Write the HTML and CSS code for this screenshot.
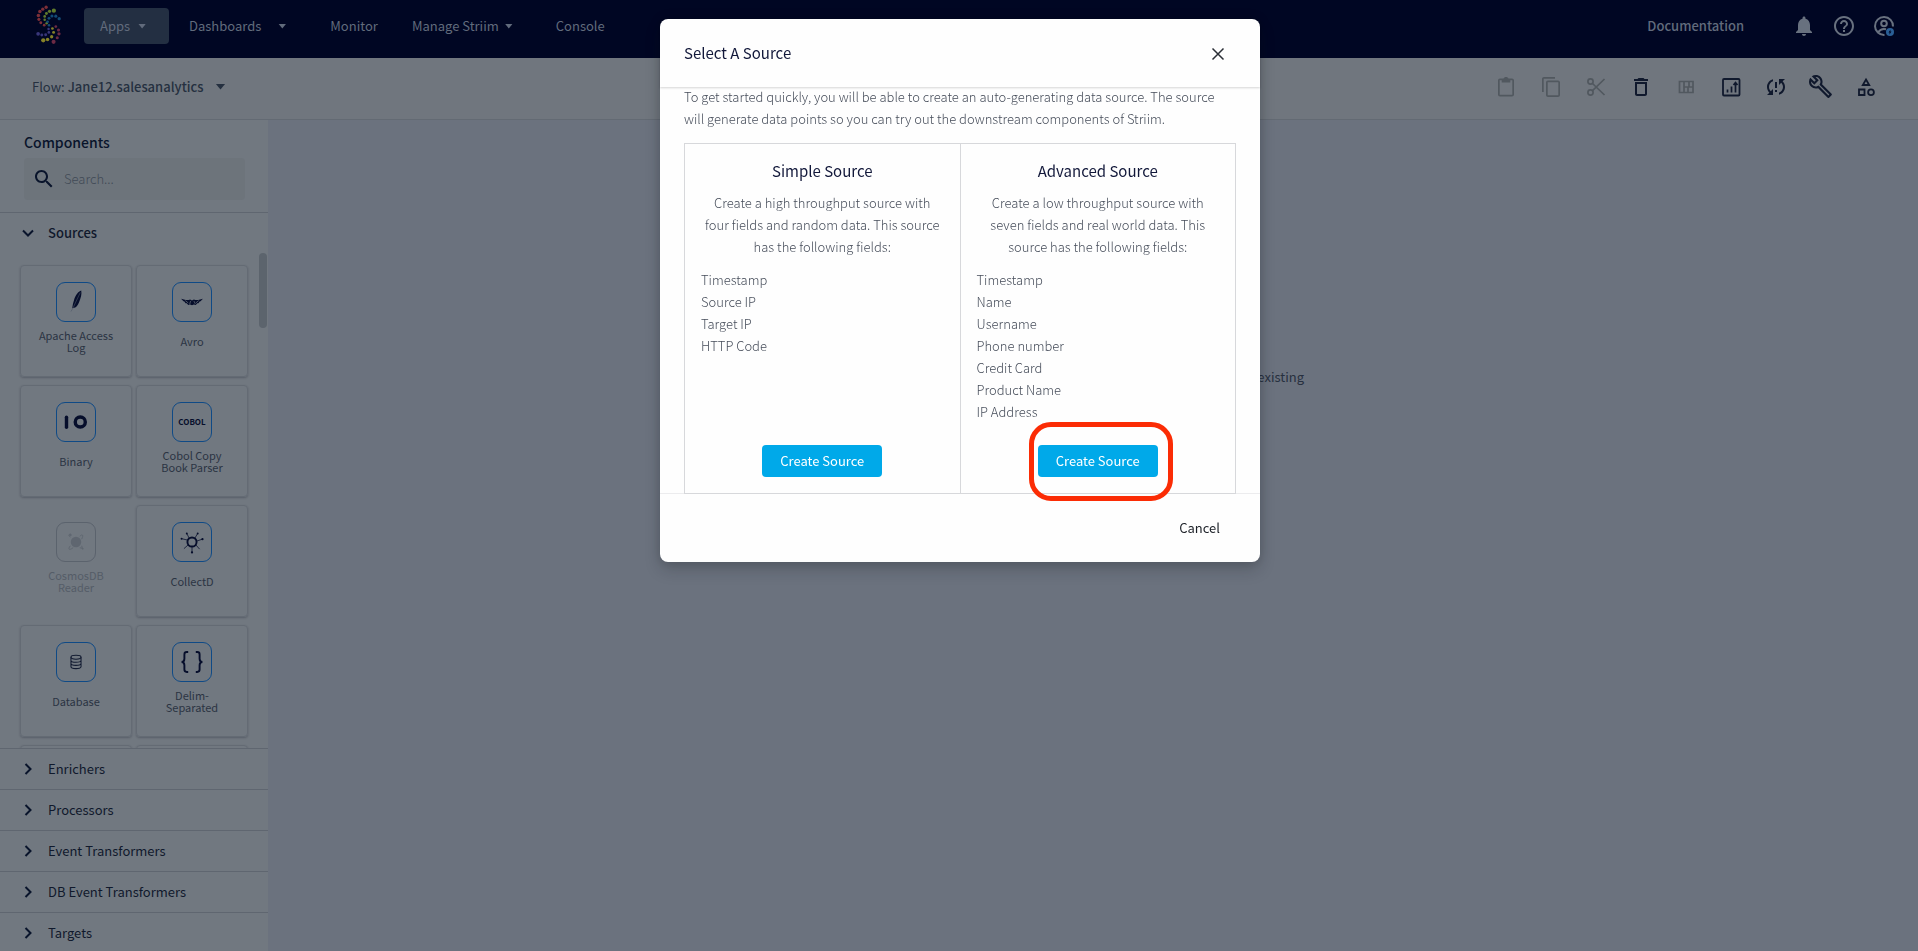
FILE: index.html
```html
<!DOCTYPE html>
<html lang="en">
<head>
<meta charset="utf-8">
<title>Flow Designer</title>
<link rel="stylesheet" href="styles.css">
</head>
<body>
<div class="app">
  <header class="topbar">
    <svg class="logo" viewBox="0 0 60 60" width="60" height="58" aria-hidden="true">
      <g fill="#7c2f38"><circle cx="26" cy="7.500" r="1.700"/><circle cx="22.500" cy="9.500" r="1.700"/><circle cx="19.500" cy="12" r="1.800"/><circle cx="18" cy="16" r="1.800"/><circle cx="18.500" cy="20" r="1.600"/><circle cx="20.500" cy="23.500" r="1.500"/><circle cx="24" cy="26" r="1.400"/></g>
      <g fill="#5f7a2c"><circle cx="34" cy="11" r="2.200"/><circle cx="29.500" cy="11.700" r="1.700"/><circle cx="26.300" cy="14" r="1.500"/><circle cx="24.500" cy="17" r="1.400"/><circle cx="24.500" cy="20.500" r="1.300"/><circle cx="26.500" cy="24" r="1.300"/></g>
      <g fill="#124c76"><circle cx="39.500" cy="19.300" r="1.700"/><circle cx="36" cy="16.700" r="1.600"/><circle cx="32" cy="16.500" r="1.600"/><circle cx="29" cy="19" r="1.500"/><circle cx="27.500" cy="22.500" r="1.400"/><circle cx="29" cy="26" r="1.300"/></g>
      <g fill="#38367a"><circle cx="17.700" cy="35" r="1.900"/><circle cx="21.500" cy="36.200" r="1.500"/><circle cx="25.500" cy="36" r="1.500"/><circle cx="28.800" cy="33.500" r="1.400"/><circle cx="28.500" cy="30" r="1.300"/></g>
      <g fill="#858128"><circle cx="32.500" cy="29.500" r="1.400"/><circle cx="33.700" cy="33.500" r="1.500"/><circle cx="31.700" cy="38" r="1.700"/><circle cx="27.500" cy="40.800" r="1.800"/><circle cx="23" cy="41.700" r="2.200"/></g>
      <g fill="#6c2a44"><circle cx="36" cy="27.500" r="1.400"/><circle cx="38.800" cy="31" r="1.600"/><circle cx="39.300" cy="35" r="1.700"/><circle cx="37.500" cy="39" r="1.600"/><circle cx="33.700" cy="43.300" r="2.100"/></g>
    </svg>
    <nav class="nav">
      <button class="nav-item nav-active" type="button">Apps <i class="caret"></i></button>
      <button class="nav-item nav-dash" type="button">Dashboards <i class="caret"></i></button>
      <a class="nav-item nav-monitor" href="#">Monitor</a>
      <button class="nav-item nav-manage" type="button">Manage Striim <i class="caret"></i></button>
      <a class="nav-item" href="#">Console</a>
    </nav>
    <div class="top-actions">
      <a class="docs" href="#">Documentation</a>
      <button class="icon-btn" type="button" aria-label="Notifications"><svg viewBox="0 0 24 24"><path d="M12 22c1.100 0 2-.9 2-2h-4c0 1.100.9 2 2 2zm6-6v-5c0-3.070-1.630-5.640-4.500-6.320V4c0-.83-.67-1.500-1.500-1.500s-1.500.67-1.500 1.500v.68C7.640 5.360 6 7.920 6 11v5l-2 2v1h16v-1l-2-2z"/></svg></button>
      <button class="icon-btn" type="button" aria-label="Help"><svg viewBox="0 0 24 24"><path d="M11 18h2v-2h-2v2zm1-16C6.480 2 2 6.480 2 12s4.480 10 10 10 10-4.480 10-10S17.520 2 12 2zm0 18c-4.410 0-8-3.590-8-8s3.590-8 8-8 8 3.590 8 8-3.590 8-8 8zm0-14c-2.210 0-4 1.790-4 4h2c0-1.100.9-2 2-2s2 .9 2 2c0 2-3 1.750-3 5h2c0-2.250 3-2.500 3-5 0-2.210-1.790-4-4-4z"/></svg></button>
      <button class="icon-btn" type="button" aria-label="Account"><svg viewBox="0 0 24 24"><g fill="none" stroke="currentColor" stroke-width="2"><path d="M12.500 21A9 9 0 1 1 21 12.500M6 18.500c2-3 5-4 8-3.200"/><circle cx="12" cy="9.500" r="2.800"/></g><circle cx="18" cy="18" r="4" fill="#2a5f96"/><path d="M18.500 15.500l-2 3h1.200l-.4 2.200 2.200-3.200h-1.200z" fill="#000623"/></svg></button>
    </div>
  </header>

  <div class="flowbar">
    <button class="flow-name" type="button"><span>Flow: <strong>Jane12.salesanalytics</strong></span><i class="caret caret-lg"></i></button>
    <div class="tools">
      <button class="tool off" type="button" aria-label="Paste" disabled><svg viewBox="0 0 24 24"><path d="M18 3.500h-3.500C14.200 2.600 13.200 2 12 2s-2.200.6-2.500 1.500H6c-1.100 0-2 .9-2 2v14c0 1.100.9 2 2 2h12c1.100 0 2-.9 2-2v-14c0-1.100-.9-2-2-2zm.3 16.300H5.700V5.200h2V7.500h8.600V5.200h2z"/></svg></button>
      <button class="tool off" type="button" aria-label="Copy" disabled><svg viewBox="0 0 24 24"><path d="M16 2H5c-1.100 0-2 .9-2 2v13h1.700V3.700H16V2zm3 3.500H9c-1.100 0-2 .9-2 2V20c0 1.100.9 2 2 2h10c1.100 0 2-.9 2-2V7.500c0-1.100-.9-2-2-2zm.3 14.800H8.700V7.200h10.600v13.100z"/></svg></button>
      <button class="tool off" type="button" aria-label="Cut" disabled><svg viewBox="0 0 24 24" fill="none" stroke="currentColor" stroke-width="1.700"><circle cx="6.500" cy="6.500" r="2.600"/><circle cx="6.500" cy="17.500" r="2.600"/><path d="M8.500 8.500L20.500 20M8.500 15.700L20.500 4"/></svg></button>
      <button class="tool" type="button" aria-label="Delete"><svg viewBox="0 0 24 24"><path d="M6 19c0 1.100.9 2 2 2h8c1.100 0 2-.9 2-2V7H6v12zM8 9h8v10H8V9zm7.500-5l-1-1h-5l-1 1H5v2h14V4z"/></svg></button>
      <button class="tool off" type="button" aria-label="Layout" disabled><svg viewBox="0 0 24 24" fill="none" stroke="currentColor" stroke-width="1.700"><path d="M5.500 6.500h13.500v11H5.500zM10 6.500v11M10 12h9M15 6.500v5.500M14 12v5.500"/></svg></button>
      <button class="tool" type="button" aria-label="Metrics"><svg viewBox="0 0 24 24" fill="none" stroke="currentColor" stroke-width="1.800"><rect x="4" y="4" width="16.500" height="16.500" rx="1"/><path d="M8.500 17.500v-3M12.500 17.500v-6M16.500 17.500V8M14.500 10l2-2.500 2 2.500" stroke-width="1.700"/></svg></button>
      <button class="tool" type="button" aria-label="Sync problem"><svg viewBox="0 0 24 24"><path d="M3 12c0 2.210.91 4.200 2.360 5.640L3 20h6v-6l-2.240 2.240C5.680 15.150 5 13.660 5 12c0-2.610 1.670-4.830 4-5.650V4.260C5.550 5.150 3 8.270 3 12zm8 5h2v-2h-2v2zM21 4h-6v6l2.240-2.240C18.320 8.850 19 10.340 19 12c0 2.610-1.670 4.830-4 5.650v2.090c3.450-.89 6-4.010 6-7.740 0-2.210-.91-4.200-2.360-5.640L21 4zm-10 9h2V7h-2v6z"/></svg></button>
      <button class="tool" type="button" aria-label="Settings"><svg viewBox="1 1 23 23"><path d="M22.610 18.990l-9.080-9.080c.93-2.340.45-5.100-1.440-7C9.790.61 6.210.4 3.660 2.260L7.500 6.110 6.080 7.520 2.250 3.690C.39 6.230.6 9.820 2.900 12.110c1.860 1.860 4.570 2.350 6.890 1.480l9.110 9.110c.39.39 1.020.39 1.410 0l2.300-2.300c.4-.38.4-1.010 0-1.410zm-3 1.600l-9.460-9.460c-.61.450-1.290.72-2 .82-1.360.2-2.790-.21-3.830-1.250C3.370 9.760 2.930 8.500 3 7.260l3.090 3.090 4.240-4.240-3.090-3.090c1.240-.07 2.490.37 3.440 1.310 1.080 1.080 1.490 2.570 1.240 3.960-.12.710-.42 1.370-.88 1.960l9.450 9.450-.88.890z"/></svg></button>
      <button class="tool" type="button" aria-label="Components"><svg viewBox="0 0 24 24" fill="none" stroke="currentColor" stroke-width="1.800"><path d="M12 4.500L15.200 10H8.800zM5 14.500h5.500V20H5z"/><circle cx="17" cy="17.200" r="2.900"/></svg></button>
    </div>
  </div>

  <div class="workspace">
    <aside class="sidebar">
      <div class="side-head">
        <h2>Components</h2>
        <label class="search">
          <svg viewBox="0 0 24 24"><path d="M15.500 14h-.79l-.28-.27C15.410 12.590 16 11.110 16 9.500 16 5.910 13.090 3 9.500 3S3 5.910 3 9.500 5.910 16 9.500 16c1.610 0 3.090-.59 4.230-1.570l.27.28v.79l5 4.990L20.490 19l-4.990-5zm-6 0C7.010 14 5 11.990 5 9.500S7.010 5 9.500 5 14 7.010 14 9.500 11.990 14 9.500 14z"/></svg>
          <input type="text" placeholder="Search..." aria-label="Search components">
        </label>
      </div>
      <button class="group open" type="button"><svg viewBox="0 0 14 14"><path d="M2 4.500l5 5 5-5"/></svg>Sources</button>
      <div class="cards-wrap">
        <div class="cards">
          <div class="card"><span class="tile"><svg viewBox="0 0 40 40"><path d="M25.500 8c-3 .8-6 5-7.500 9.500-1 3-1.600 6-2 9l2-.5c2 .3 4-2.500 5.300-6C25 16 26.300 12 25.500 8z" fill="#060e2b"/><path d="M24.500 10L16.500 27l-1.800 3" fill="none" stroke="#4e5668" stroke-width=".6"/></svg></span><span class="label">Apache Access Log</span></div>
          <div class="card"><span class="tile"><svg viewBox="0 0 40 40"><path d="M8.500 16.500l5 1.300 3 .2 1.500-.6 2 .9 2-.9 1.500.6 3-.2 5-1.300-2.500 2.700-1 .2-1.200 1.800-1.300.2-1.500 1.800-2-.7-2 .9-2-.9-2 .7-1.500-1.800-1.300-.2-1.200-1.800-1-.2z" fill="#060e2b"/><path d="M13 18.500l3 2.500M18.500 19l-1 3.500M22 19l1.500 3M27 18.500l-3 2.500" stroke="#717880" stroke-width=".7"/></svg></span><span class="label">Avro</span></div>
          <div class="card"><span class="tile"><svg viewBox="0 0 40 40" fill="none" stroke="#060e2b" stroke-width="3.600"><path d="M10 15v10.500" stroke-linecap="round"/><circle cx="24.500" cy="20" r="5.300"/></svg></span><span class="label">Binary</span></div>
          <div class="card"><span class="tile cobol">COBOL</span><span class="label">Cobol Copy Book Parser</span></div>
          <div class="card disabled"><span class="tile"><svg viewBox="0 0 40 40"><circle cx="20" cy="20" r="5.500" fill="#454d5a"/><path d="M14 15c-3-3-1-3 1-2M24 14c3-3 4-1 2 3M14 24c-3 4-1 5 3 2M26 24l1 4M24 26l4 1M14 11v3M12.500 12.500h3" fill="none" stroke="#454d5a"/></svg></span><span class="label">CosmosDB Reader</span></div>
          <div class="card"><span class="tile"><svg viewBox="0 0 40 40" fill="none" stroke="#060e2b"><circle cx="20" cy="20" r="4.800" stroke-width="2"/><path d="M20 25v6M25 19l6-2M15.500 18L9 16.500M17 16l-2.500-5M23 16l3-5M16 23l-4.500 4M24 23l4 4.500" stroke-width=".8"/><g fill="#060e2b" stroke="none"><circle cx="20" cy="31" r="1.200"/><circle cx="31" cy="17" r="1.200"/><circle cx="9" cy="16.500" r="1"/><circle cx="14.500" cy="11" r="1"/><circle cx="26" cy="11" r="1"/></g></svg></span><span class="label">CollectD</span></div>
          <div class="card"><span class="tile"><svg viewBox="0 0 40 40" fill="none" stroke="#111a30" stroke-width="1.100"><ellipse cx="20" cy="15" rx="5.300" ry="2"/><path d="M14.700 15v10c0 2.600 10.600 2.600 10.600 0V15M14.700 18.300c0 2.600 10.600 2.600 10.600 0M14.700 21.600c0 2.600 10.600 2.600 10.600 0"/></svg></span><span class="label">Database</span></div>
          <div class="card"><span class="tile"><svg viewBox="0 0 40 40" fill="none" stroke="#060e2b" stroke-width="2"><path d="M16 9.500h-1.500c-2 0-2.500 1-2.500 2.500v4.500c0 2-1 3.500-3 3.500 2 0 3 1.500 3 3.500V28c0 1.500.5 2.500 2.500 2.500H16M24 9.500h1.500c2 0 2.500 1 2.500 2.500v4.500c0 2 1 3.500 3 3.500-2 0-3 1.500-3 3.500V28c0 1.500-.5 2.500-2.500 2.500H24"/></svg></span><span class="label">Delim-Separated</span></div>
          <div class="card"></div>
          <div class="card"></div>
        </div>
        <span class="thumb"></span>
      </div>
      <button class="group" type="button"><svg viewBox="0 0 14 14"><path d="M4.500 2l5 5-5 5"/></svg>Enrichers</button>
      <button class="group" type="button"><svg viewBox="0 0 14 14"><path d="M4.500 2l5 5-5 5"/></svg>Processors</button>
      <button class="group" type="button"><svg viewBox="0 0 14 14"><path d="M4.500 2l5 5-5 5"/></svg>Event Transformers</button>
      <button class="group" type="button"><svg viewBox="0 0 14 14"><path d="M4.500 2l5 5-5 5"/></svg>DB Event Transformers</button>
      <button class="group" type="button"><svg viewBox="0 0 14 14"><path d="M4.500 2l5 5-5 5"/></svg>Targets</button>
    </aside>
    <main class="canvas"><p class="hint">existing</p></main>
  </div>
</div>

<div class="overlay">
  <section class="modal" role="dialog" aria-labelledby="dlg-title">
    <div class="modal-head">
      <h1 id="dlg-title">Select A Source</h1>
      <button class="close" type="button" aria-label="Close"><svg viewBox="0 0 14 14"><path d="M1.500 1.500l11 11M12.500 1.500l-11 11"/></svg></button>
    </div>
    <div class="modal-body">
      <p class="intro">To get started quickly, you will be able to create an auto-generating data source. The source will generate data points so you can try out the downstream components of Striim.</p>
      <div class="options">
        <article class="option">
          <h3>Simple Source</h3>
          <p>Create a high throughput source with four fields and random data. This source has the following fields:</p>
          <ul><li>Timestamp</li><li>Source IP</li><li>Target IP</li><li>HTTP Code</li></ul>
          <div class="action"><button class="create" type="button">Create Source</button></div>
        </article>
        <article class="option">
          <h3>Advanced Source</h3>
          <p>Create a low throughput source with seven fields and real world data. This source has the following fields:</p>
          <ul><li>Timestamp</li><li>Name</li><li>Username</li><li>Phone number</li><li>Credit Card</li><li>Product Name</li><li>IP Address</li></ul>
          <div class="action"><button class="create" type="button">Create Source</button><span class="ring"></span></div>
        </article>
      </div>
    </div>
    <div class="modal-foot"><button class="cancel" type="button">Cancel</button></div>
  </section>
</div>
</body>
</html>
```
FILE: styles.css
```css
* { box-sizing: border-box; }
html, body { height: 100%; }
body, h1, h2, h3, p, ul { margin: 0; padding: 0; }
body {
  font-family: "Noto Sans CJK SC", "Open Sans", sans-serif;
  font-size: 13px;
  line-height: 20px;
  color: #151f33;
  background: #6b727e;
  overflow: hidden;
}
button, input {
  font: inherit;
  color: inherit;
  background: none;
  border: 0;
  padding: 0;
}
a { color: inherit; text-decoration: none; }
ul { list-style: none; }
svg { display: block; }

.app { height: 100%; display: flex; flex-direction: column; }

.topbar {
  height: 58px;
  flex: none;
  display: flex;
  align-items: center;
  padding: 0 22px 6px 20px;
  background: #000623;
  color: #616b7c;
}
.logo { flex: none; margin: 6px 4px 0 0; }
.nav { display: flex; align-items: center; }
.nav-item { display: flex; align-items: center; white-space: nowrap; }
.nav-active {
  height: 36px;
  width: 85px;
  padding: 0 16px;
  gap: 8px;
  margin-right: 20px;
  background: #232f42;
  border-radius: 4px;
}
.nav-dash { gap: 17px; margin-right: 44px; }
.nav-monitor { margin-right: 34px; }
.nav-manage { gap: 6px; margin-right: 43px; }
.caret {
  width: 8px;
  height: 5px;
  background: currentColor;
  clip-path: polygon(0 0, 100% 0, 50% 100%);
}
.caret-lg { width: 10px; height: 6px; }
.top-actions { margin-left: auto; display: flex; align-items: center; gap: 16px; }
.docs { font-weight: 500; margin-right: 32px; }
.icon-btn, .tool { width: 24px; height: 24px; flex: none; fill: currentColor; }
.icon-btn { color: #68717f; }

.flowbar {
  height: 62px;
  flex: none;
  display: flex;
  align-items: center;
  justify-content: space-between;
  padding: 0 40px 4px 32px;
  background: #70767e;
  border-bottom: 1px solid #636a73;
}
.flow-name { display: flex; align-items: center; gap: 12px; color: #253040; }
.flow-name strong { font-weight: 500; }
.tools { display: flex; gap: 21px; }
.tool { color: #10192d; }
.off { color: #51585f; }
.flowbar svg[fill="none"] { fill: none; }

.workspace { flex: 1; min-height: 0; display: flex; }
.sidebar {
  width: 268px;
  flex: none;
  display: flex;
  flex-direction: column;
  margin-bottom: -2px;
  background: #717880;
}
.side-head { padding: 12px 23px 12px 24px; }
.side-head h2 { font-size: 14px; font-weight: 500; line-height: 20px; color: #09142b; }
.search {
  display: flex;
  align-items: center;
  gap: 8px;
  height: 42px;
  margin-top: 6px;
  padding: 0 8px;
  background: #6d747b;
  border-radius: 4px;
}
.search svg { width: 24px; height: 24px; flex: none; fill: #09142b; }
.search input { flex: 1; min-width: 0; outline: 0; }
.search input::placeholder { color: #414a56; opacity: 1; font-weight: 300; }
.group {
  height: 41px;
  flex: none;
  display: flex;
  align-items: center;
  gap: 13px;
  padding-left: 21px;
  text-align: left;
  border-top: 1px solid #5f6670;
  color: #10192c;
}
.group svg { width: 14px; height: 14px; fill: none; stroke: #09142b; stroke-width: 2; }
.open { font-weight: 500; }
.cards-wrap { flex: 1; min-height: 0; position: relative; overflow: hidden; }
.cards {
  display: grid;
  grid-template-columns: 1fr 1fr;
  grid-auto-rows: 112px;
  gap: 8px 4px;
  padding: 12px 20px 0;
}
.card {
  display: flex;
  flex-direction: column;
  align-items: center;
  padding-top: 16px;
  border: 1px solid #646b74;
  border-radius: 4px;
  box-shadow: 0 1px 2px rgba(30, 38, 50, 0.3);
  color: #2b3443;
}
.tile {
  width: 40px;
  height: 40px;
  flex: none;
  display: grid;
  place-items: center;
  border: 1px solid #0f4a86;
  border-radius: 9px;
}
.tile svg { width: 38px; height: 38px; }
.cobol { font-size: 8px; font-weight: 700; color: #060e2b; }
.label {
  width: 76px;
  height: 38px;
  display: grid;
  place-items: center;
  font-size: 11px;
  line-height: 12px;
  text-align: center;
}
.disabled { opacity: 0.4; border-color: transparent; box-shadow: none; }
.disabled .tile { border-color: #3b4452; }
.thumb {
  position: absolute;
  top: 0;
  right: 1px;
  width: 8px;
  height: 75px;
  border-radius: 4px;
  background: #5c646d;
}
.canvas { flex: 1; min-width: 0; padding-top: 247px; }
.hint { max-width: 422px; margin: 0 auto; text-align: right; color: #27303f; }

.overlay {
  position: fixed;
  inset: 0;
  display: flex;
  justify-content: center;
  align-items: flex-start;
  padding: 19px 0 0 2px;
}
.modal {
  width: 600px;
  background: #fefefe;
  border-radius: 8px;
  box-shadow: 0 8px 16px rgba(20, 24, 32, 0.2), 0 0 12px rgba(20, 24, 32, 0.15);
}
.modal-head {
  height: 68px;
  display: flex;
  align-items: center;
  justify-content: space-between;
  padding: 2px 35px 0 24px;
  box-shadow: 0 1px 2px rgba(0, 0, 0, 0.16);
}
.modal-head h1 { font-size: 15px; font-weight: 400; line-height: 22px; padding-bottom: 2px; color: #12183a; }
.close { width: 14px; height: 14px; }
.close svg { fill: none; stroke: #2b2f36; stroke-width: 1.5; }
.modal-body { margin-top: -1px; padding: 0 24px; color: #464d5a; font-weight: 300; line-height: 22px; }
.options {
  position: relative;
  display: flex;
  margin-top: 13px;
  border: 1px solid #d7d8db;
}
.option { flex: 1; display: flex; flex-direction: column; padding: 15px 16px 16px; }
.option + .option { border-left: 1px solid #d7d8db; }
.option h3 { font-size: 15px; font-weight: 400; line-height: 24px; text-align: center; color: #12183a; }
.option p { margin: 9px 0 11px; text-align: center; }
.option ul { margin-bottom: 22px; }
.action { position: relative; align-self: center; margin-top: auto; }
.create {
  display: block;
  height: 32px;
  padding: 0 18px;
  border-radius: 4px;
  background: #00a9e9;
  color: #ffffff;
  font-weight: 400;
}
.ring {
  position: absolute;
  inset: -23px -15px -24px -9px;
  border: 5px solid #fb2c05;
  border-radius: 22px;
}
.modal-foot {
  height: 69px;
  display: flex;
  align-items: center;
  justify-content: flex-end;
  margin-top: -1px;
  padding: 0 40px;
  border-top: 1px solid #ececee;
}
.cancel { color: #1b1f26; }
```
